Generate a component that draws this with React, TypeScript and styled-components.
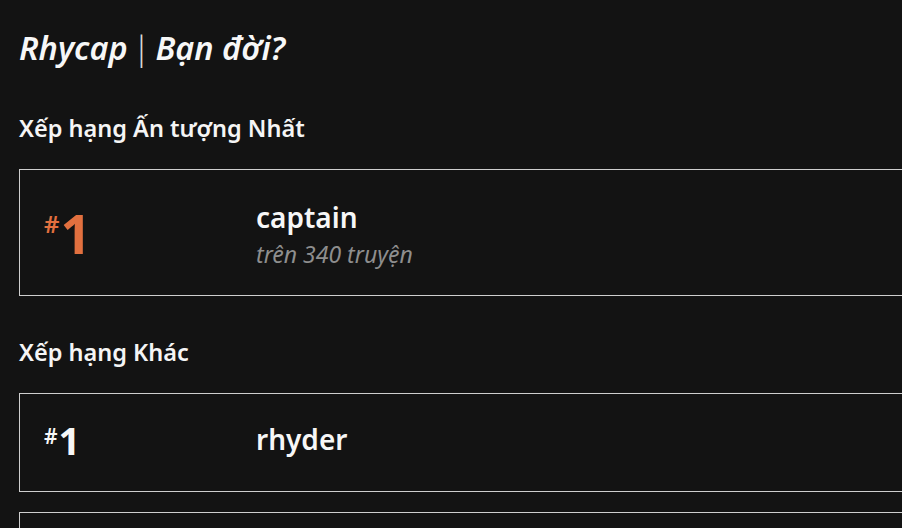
import styled, { createGlobalStyle } from 'styled-components';

interface RankType {
  rank: number;
  name: string;
  detail?: string;
}

const GlobalStyle = createGlobalStyle`
  html, body {
    margin: 0;
    padding: 0;
    background-color: #131313;
    overflow: hidden;
  }
  body {
    font-family: 'Noto Sans', 'Open Sans', sans-serif;
    color: #f5f5f5;
  }
`;

const Page = styled.main`
  display: flex;
  flex-direction: column;
  padding: 24px 0 0 19px;
  width: 1100px;
`;

const Title = styled.h1`
  margin: 0;
  font-size: 32.5px;
  font-weight: 600;
  font-style: italic;
  line-height: 48px;
  color: #f7f7f7;
  display: flex;
  align-items: center;
  gap: 5px;
`;

const Divider = styled.span`
  font-style: normal;
  font-weight: 300;
  font-size: 33px;
  color: #d8d8d8;
`;

const SectionHeader = styled.h2<{ $top: number }>`
  margin: 0;
  font-size: 23.5px;
  font-weight: 600;
  line-height: 32px;
  color: #f5f5f5;
  margin-top: ${({ $top }) => $top}px;
  margin-bottom: 25px;
`;

const Card = styled.div<{ $height: number }>`
  display: flex;
  align-items: center;
  width: 1000px;
  height: ${({ $height }) => $height}px;
  box-sizing: border-box;
  border: 1.5px solid #cfcfcf;
  padding-left: 24px;
  margin-bottom: 20px;
`;

const Rank = styled.div<{ $top: boolean }>`
  width: 212px;
  display: flex;
  align-items: flex-start;
  color: ${({ $top }) => ($top ? '#e2703f' : '#f7f7f7')};
  font-weight: 700;
  line-height: 1;
  padding-top: ${({ $top }) => ($top ? 6 : 0)}px;
`;

const Hash = styled.span<{ $top: boolean }>`
  font-size: ${({ $top }) => ($top ? 24 : 21)}px;
  font-weight: 600;
  margin-right: 1px;
`;

const Number = styled.span<{ $top: boolean }>`
  font-size: ${({ $top }) => ($top ? 54 : 38)}px;
  margin-top: ${({ $top }) => ($top ? -6 : -5)}px;
`;

const Info = styled.div<{ $top: boolean }>`
  display: flex;
  flex-direction: column;
  gap: 4px;
  padding-top: ${({ $top }) => ($top ? 3 : 0)}px;
  padding-bottom: ${({ $top }) => ($top ? 0 : 8)}px;
`;

const Name = styled.span`
  font-size: 28px;
  font-weight: 600;
  line-height: 36px;
  color: #f7f7f7;
`;

const Detail = styled.span`
  font-size: 23px;
  font-style: italic;
  line-height: 30px;
  color: #8e8e8e;
`;

const RankCard = ({ rank, name, detail, top }: RankType & { top: boolean }) => (
  <Card $height={top ? 127 : 99}>
    <Rank $top={top}>
      <Hash $top={top}>#</Hash>
      <Number $top={top}>{rank}</Number>
    </Rank>
    <Info $top={top}>
      <Name>{name}</Name>
      {detail && <Detail>{detail}</Detail>}
    </Info>
  </Card>
);

const others: RankType[] = [
  { rank: 1, name: 'rhyder' },
  { rank: 2, name: 'captain' },
];

const App = () => {
  return (
    <>
      <GlobalStyle />
      <Page>
        <Title>
          Rhycap <Divider>|</Divider> Bạn đời?
        </Title>
        <SectionHeader $top={40}>Xếp hạng Ấn tượng Nhất</SectionHeader>
        <RankCard top rank={1} name="captain" detail="trên 340 truyện" />
        <SectionHeader $top={20}>Xếp hạng Khác</SectionHeader>
        {others.map((item) => (
          <RankCard key={item.name} top={false} {...item} />
        ))}
      </Page>
    </>
  );
};

export default App;
